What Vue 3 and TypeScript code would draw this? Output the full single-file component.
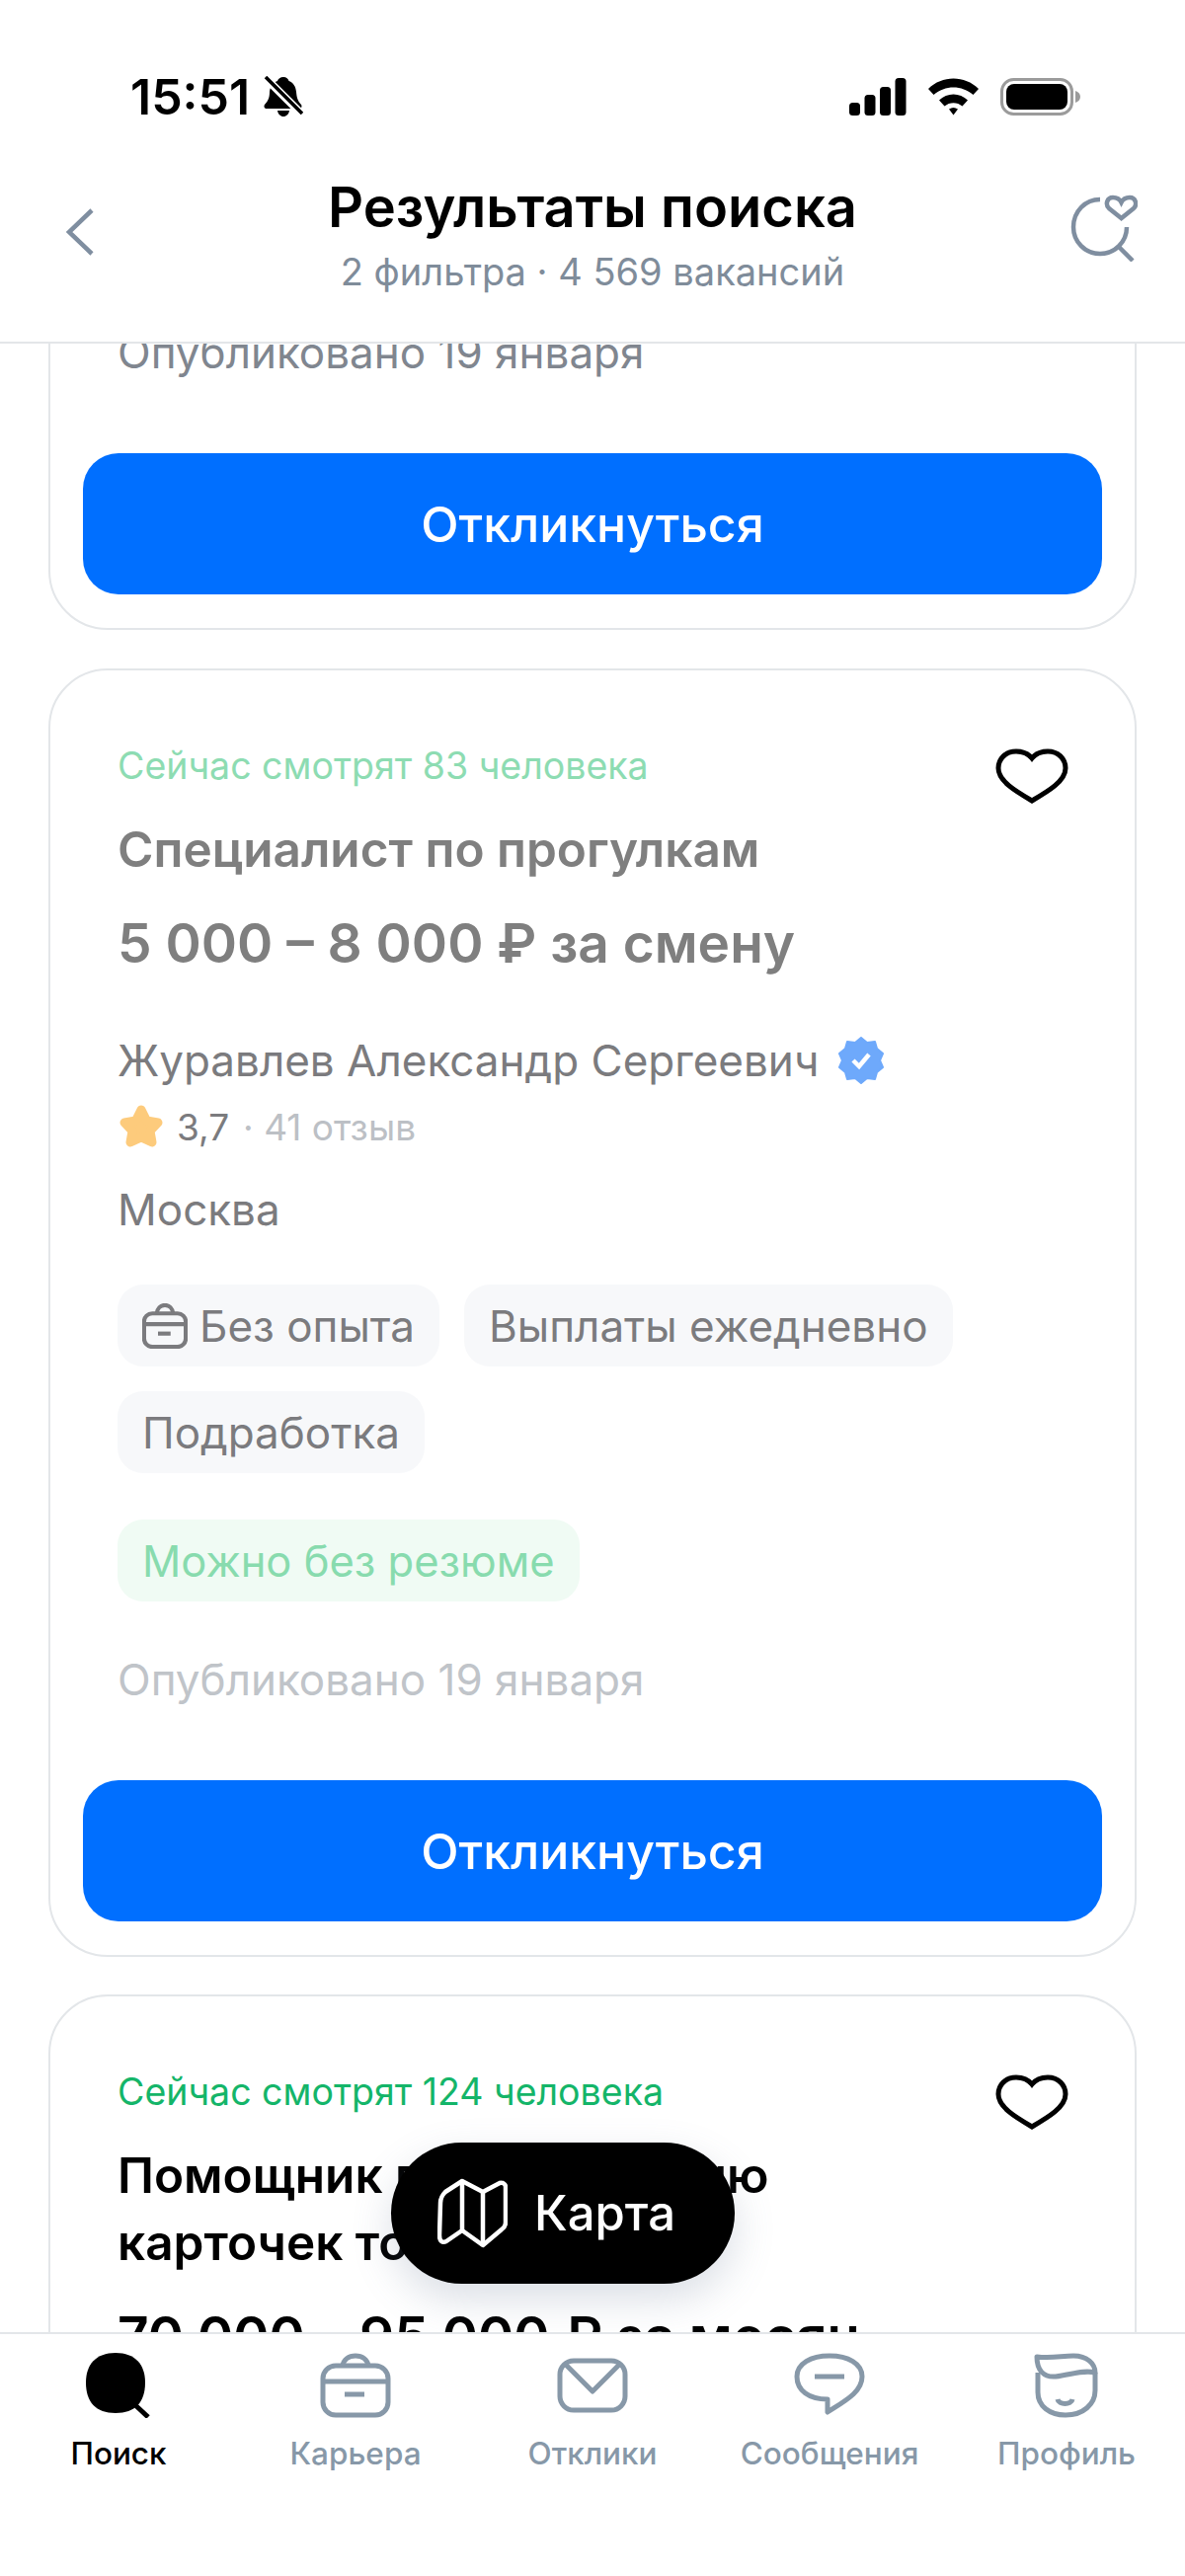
<template>
  <div class="screen">
    <header class="top">
      <div class="status">
        <div class="status-left">
          <span class="time">15:51</span>
          <svg class="bell" width="40" height="42" viewBox="0 0 40 42">
            <path d="M20 1c3 0 5 2 5.500 4 5 2 7 6 7.500 11 .5 6 1.500 9 5 13 1 1.500 .5 4-2 4H3c-2.500 0-3-2.500-2-4 3.500-4 5-7 5-13 .5-5 3-9 8-11C14.500 3 17 1 20 1z" />
            <path d="M14 35h12c-.5 3.500-3 6-6 6s-5.500-2.500-6-6z" />
            <path class="bell-gap" d="M1 1l38 38" />
            <path class="bell-line" d="M2 1l37 37" />
          </svg>
        </div>
        <div class="status-right">
          <svg width="58" height="38" viewBox="0 0 58 38">
            <rect x="0" y="25" width="11" height="13" rx="3.500" />
            <rect x="15.500" y="17" width="11" height="21" rx="3.500" />
            <rect x="31" y="9" width="11" height="29" rx="3.500" />
            <rect x="46.500" y="0" width="11" height="38" rx="3.500" />
          </svg>
          <svg width="51" height="38" viewBox="0 0 51 38">
            <path d="M0 11C14-3 37-3 51 11l-5.500 6C34 7 17 7 5.500 17z" />
            <path d="M11 22.500c8-8 21-8 29 0l-5.500 6c-5-4.500-13-4.500-18 0z" />
            <path d="M21 31.500c3-2 6-2 9 0l-4.500 6z" />
          </svg>
          <svg width="82" height="38" viewBox="0 0 82 38">
            <rect x="1.500" y="1.500" width="71" height="35" rx="12" fill="none" stroke="#9b9b9b" stroke-width="3" />
            <rect x="6" y="6" width="62" height="26" rx="8" />
            <path class="nub" d="M76 13c3 1 5 3 5 6s-2 5-5 6z" />
          </svg>
        </div>
      </div>
      <div class="nav">
        <svg class="back" width="30" height="48" viewBox="0 0 30 48">
          <path d="M27 2L4 24l23 22" />
        </svg>
        <div class="nav-text">
          <div class="nav-title">Результаты поиска</div>
          <div class="nav-sub">2 фильтра · 4 569 вакансий</div>
        </div>
        <svg class="saved" width="68" height="68" viewBox="0 0 68 68">
          <path d="M30 5C15 5 3 17 3 33c0 15 12 27 27 27s27-12 27-27" />
          <path d="M49 53l14 14" />
          <path d="M51.500 24L39 14c-4-4-2-11 4-11 4 0 7 2 8.500 5C53 5 56 3 60 3c6 0 8 7 4 11z" />
        </svg>
      </div>
    </header>

    <main class="list">
      <section class="card card-cut">
        <div class="published">Опубликовано 19 января</div>
        <button class="apply">Откликнуться</button>
      </section>

      <section class="card seen">
        <div class="head-row">
          <div class="viewers">Сейчас смотрят 83 человека</div>
          <svg class="heart" width="74" height="56" viewBox="0 0 74 56">
            <path d="M37 10C33 5 27 3 21 3 10 3 3 11 3 20c0 13 17 23 34 33 17-10 34-20 34-33 0-9-7-17-18-17-6 0-12 2-16 7z" />
          </svg>
        </div>
        <h2 class="job-title">Специалист по прогулкам</h2>
        <div class="salary">5 000 – 8 000 ₽ за смену</div>
        <div class="employer">
          <span>Журавлев Александр Сергеевич</span>
          <svg width="46" height="48" viewBox="0 0 46 48">
            <path class="badge" d="M23 1l6 5 8-1 2 7 6 5-3 7 3 7-6 5-2 7-8-1-6 5-6-5-8 1-2-7-6-5 3-7-3-7 6-5 2-7 8 1z" />
            <path class="badge-check" d="M15 24l6 6 10-12" />
          </svg>
        </div>
        <div class="rating">
          <svg width="48" height="48" viewBox="0 0 48 48">
            <path class="star" d="M24 7l5.500 11L41 20l-8 8.500L35 40l-11-5-11 5 2-11.500L7 20l11.500-2z" />
          </svg>
          <span class="score">3,7</span>
          <span class="reviews">· 41 отзыв</span>
        </div>
        <div class="city">Москва</div>
        <div class="tags">
          <span class="tag">
            <svg class="tag-icon" width="46" height="46" viewBox="0 0 72 72">
              <path d="M23 16c1-8 6-13 13-13s12 5 13 13" />
              <rect x="3" y="16" width="66" height="53" rx="13" />
              <path d="M3 33h66" />
              <path d="M25 48h20" />
            </svg>
            Без опыта
          </span>
          <span class="tag">Выплаты ежедневно</span>
          <span class="tag">Подработка</span>
        </div>
        <span class="tag tag-green">Можно без резюме</span>
        <div class="published">Опубликовано 19 января</div>
        <button class="apply">Откликнуться</button>
      </section>

      <section class="card">
        <div class="head-row">
          <div class="viewers">Сейчас смотрят 124 человека</div>
          <svg class="heart" width="74" height="56" viewBox="0 0 74 56">
            <path d="M37 10C33 5 27 3 21 3 10 3 3 11 3 20c0 13 17 23 34 33 17-10 34-20 34-33 0-9-7-17-18-17-6 0-12 2-16 7z" />
          </svg>
        </div>
        <h2 class="job-title">Помощник по заполнению карточек товаров</h2>
        <div class="salary">70 000 – 95 000 ₽ за месяц</div>
      </section>

      <button class="map-btn">
        <svg width="71" height="71" viewBox="0 0 71 71">
          <path d="M25 3l21 11 17-9c3-1 6 1 6 4v36c0 3-1 5-4 7L46 68 25 53 9 64c-4 2-7 0-7-6l1-33c0-5 2-8 5-11z" />
          <path d="M25 3v50M46 14v54" />
        </svg>
        <span>Карта</span>
      </button>
    </main>

    <nav class="tabs">
      <div v-for="tab in tabs" :key="tab.label" class="tab" :class="{ active: tab.active }">
        <div class="tab-icon">
          <svg v-if="tab.icon === 'search'" width="66" height="66" viewBox="0 0 66 66">
            <path class="fill" d="M30 0c20 0 30 12 30 30 0 20-10 31-30 31C10 61 0 50 0 30 0 12 10 0 30 0z" />
            <path class="line" d="M49 52l14 13" />
          </svg>
          <svg v-else-if="tab.icon === 'case'" width="72" height="66" viewBox="0 0 72 66">
            <path d="M23 13c1-6 6-10 13-10s12 4 13 10" />
            <rect x="3" y="13" width="66" height="50" rx="13" />
            <path d="M3 29h66" />
            <path d="M25 42h20" stroke-width="6" />
          </svg>
          <svg v-else-if="tab.icon === 'mail'" width="72" height="56" viewBox="0 0 72 56">
            <rect x="3" y="3" width="66" height="50" rx="14" />
            <path d="M8 6l28 28L64 6" />
          </svg>
          <svg v-else-if="tab.icon === 'chat'" width="72" height="66" viewBox="0 0 72 66">
            <path d="M34 60V47C15 47 3 38 3 24 3 11 17 3 36 3s33 8 33 21c0 16-18 25-35 36z" />
            <path d="M21 24h30" stroke-width="6" />
          </svg>
          <svg v-else width="66" height="66" viewBox="0 0 66 66">
            <path d="M3 4c15 2 25-1 37-1 14 0 22 8 22 17-12-3-24 2-40 4C10 25 3 18 3 4z" />
            <path d="M4 20v20c0 14 12 23 28 23 18 0 30-11 30-25V20" />
            <path d="M24 47c1 6 14 6 15 0" />
          </svg>
        </div>
        <span class="tab-label">{{ tab.label }}</span>
      </div>
    </nav>
  </div>
</template>

<script setup lang="ts">
interface Tab {
  label: string;
  icon: string;
  active?: boolean;
}

const tabs: Tab[] = [
  { label: 'Поиск', icon: 'search', active: true },
  { label: 'Карьера', icon: 'case' },
  { label: 'Отклики', icon: 'mail' },
  { label: 'Сообщения', icon: 'chat' },
  { label: 'Профиль', icon: 'face' },
];
</script>

<style>
html,
body {
  margin: 0;
  background: #fff;
}
</style>

<style scoped>
.screen {
  position: relative;
  display: flex;
  flex-direction: column;
  width: 1200px;
  height: 2609px;
  overflow: hidden;
  background: #fff;
  font-family: Inter, "Liberation Sans", sans-serif;
  color: #000;
}

/* top bar */
.top {
  flex: none;
  height: 346px;
  border-bottom: 2px solid #e3e6e9;
  background: #fff;
  box-sizing: content-box;
}

.status {
  display: flex;
  justify-content: space-between;
  align-items: center;
  height: 44px;
  padding: 76px 105px 0 132px;
}

.status-left {
  display: flex;
  align-items: center;
  gap: 14px;
}

.status-right {
  display: flex;
  align-items: center;
  gap: 22px;
}

.time {
  font-size: 50px;
  font-weight: 600;
  line-height: 44px;
}

.bell-gap {
  stroke: #fff;
  stroke-width: 8;
}

.bell-line {
  stroke: #000;
  stroke-width: 3.500;
}

.nub {
  fill: #9b9b9b;
}

.nav {
  display: grid;
  grid-template-columns: 1fr auto 1fr;
  align-items: start;
  padding: 66px 48px 0;
}

.nav-text {
  text-align: center;
}

.nav-title {
  font-size: 56px;
  font-weight: 600;
  line-height: 48px;
}

.nav-sub {
  margin-top: 21px;
  font-size: 38px;
  line-height: 40px;
  color: #7f8c9a;
}

.back {
  margin: 25px 0 0 18px;
}

.saved {
  justify-self: end;
  margin-top: 11px;
}

.back path,
.saved path {
  fill: none;
  stroke: #7f8ea0;
  stroke-width: 4.500;
}

/* results */
.list {
  position: relative;
  flex: 1;
  min-height: 0;
  overflow: hidden;
  padding: 0 49px;
}

.card {
  box-sizing: border-box;
  margin-bottom: 38px;
  padding: 73px 33px 34px;
  border: 2px solid #e3e6e9;
  border-radius: 60px;
  background: #fff;
}

.card-cut {
  margin-top: -100px;
  margin-bottom: 39px;
  padding-top: 81px;
}

.head-row {
  display: flex;
  align-items: flex-start;
  justify-content: space-between;
  height: 48px;
  padding-left: 35px;
  padding-right: 34px;
}

.viewers {
  font-size: 37.500px;
  line-height: 48px;
  color: #14b569;
}

.heart {
  margin-top: 6px;
}

.heart path {
  fill: none;
  stroke: #000;
  stroke-width: 5;
}

.job-title {
  margin: 26px 0 0;
  padding-left: 35px;
  max-width: 800px;
  font-size: 49.500px;
  font-weight: 600;
  line-height: 68px;
}

.salary {
  margin-top: 25px;
  padding-left: 35px;
  font-size: 55px;
  font-weight: 600;
  line-height: 72px;
}

.employer {
  display: flex;
  align-items: center;
  gap: 20px;
  margin-top: 57px;
  padding-left: 35px;
  height: 52px;
  font-size: 44px;
  line-height: 52px;
  color: #7b7b7e;
}

.badge {
  fill: #6ea9fb;
  stroke: #6ea9fb;
  stroke-width: 2;
  stroke-linejoin: round;
}

.badge-check {
  fill: none;
  stroke: #fff;
  stroke-width: 4.500;
}

.rating {
  display: flex;
  align-items: center;
  margin-top: 16px;
  padding-left: 35px;
  height: 50px;
  font-size: 37px;
}

.star {
  fill: #fdcb7c;
  stroke: #fdcb7c;
  stroke-width: 9;
  stroke-linejoin: round;
}

.score {
  margin-left: 12px;
  color: #7b7b7e;
}

.reviews {
  margin-left: 14px;
  color: #bcc0c5;
}

.city {
  margin-top: 33px;
  padding-left: 35px;
  font-size: 44px;
  line-height: 52px;
  color: #7b7b7e;
}

.tags {
  display: flex;
  flex-wrap: wrap;
  gap: 25px;
  margin-top: 50px;
  padding-left: 35px;
}

.tag {
  display: inline-flex;
  align-items: center;
  gap: 12px;
  height: 83px;
  padding: 0 25px;
  border-radius: 26px;
  background: #f7f8fa;
  font-size: 44px;
  color: #7b7b7e;
}

.tag-icon path,
.tag-icon rect {
  fill: none;
  stroke: #7b7b7e;
  stroke-width: 6.500;
  stroke-linejoin: round;
}

.tag-green {
  display: flex;
  width: fit-content;
  margin: 47px 0 0 35px;
  background: #f0fbf4;
  color: #88dbae;
  font-size: 43.500px;
}

.published {
  margin-top: 53px;
  padding-left: 35px;
  font-size: 44px;
  line-height: 52px;
  color: #80868f;
}

.card-cut .published {
  margin-top: 0;
}

.seen .published {
  color: #c0c4c9;
}

.apply {
  display: block;
  width: 100%;
  height: 143px;
  margin-top: 76px;
  border: 0;
  border-radius: 36px;
  background: #006fff;
  color: #fff;
  font-family: inherit;
  font-size: 50px;
  font-weight: 500;
}

.seen .viewers {
  color: #8ddcb2;
}

.seen .job-title,
.seen .salary {
  color: #7f7f7f;
}

.map-btn {
  position: absolute;
  left: 396px;
  bottom: 49px;
  display: flex;
  align-items: center;
  gap: 27px;
  width: 348px;
  height: 143px;
  padding: 0 0 0 47px;
  border: 0;
  border-radius: 72px;
  background: #000;
  color: #fff;
  font-family: inherit;
  font-size: 49px;
  font-weight: 500;
  box-shadow: 0 16px 40px rgba(90, 110, 140, 0.22);
}

.map-btn path {
  fill: none;
  stroke: #fff;
  stroke-width: 4.500;
  stroke-linejoin: round;
}

/* bottom tabs */
.tabs {
  flex: none;
  display: grid;
  grid-template-columns: repeat(5, 1fr);
  height: 245px;
  border-top: 2px solid #e3e6e9;
  background: #fff;
}

.tab {
  display: flex;
  flex-direction: column;
  align-items: center;
  padding-top: 19px;
  color: #8798a8;
}

.tab.active {
  color: #000;
}

.tab-icon {
  display: flex;
  align-items: center;
  height: 66px;
}

.tab-icon path,
.tab-icon rect {
  fill: none;
  stroke: currentColor;
  stroke-width: 5;
  stroke-linejoin: round;
}

.tab-icon .fill {
  fill: currentColor;
  stroke: none;
}

.tab-label {
  margin-top: 16px;
  font-size: 31.500px;
  font-weight: 500;
  line-height: 40px;
}
</style>
